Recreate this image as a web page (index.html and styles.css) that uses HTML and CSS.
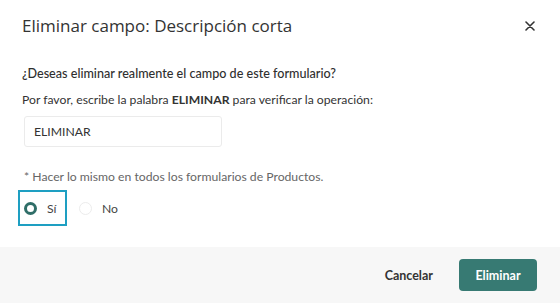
FILE: index.html
```html
<!DOCTYPE html>
<html lang="es">
<head>
<meta charset="utf-8">
<title>Eliminar campo</title>
<link rel="stylesheet" href="styles.css">
</head>
<body>
<div class="modal">
  <div class="modal-header">
    <h1 class="modal-title">Eliminar campo: Descripción corta</h1>
    <button class="close" aria-label="Cerrar">
      <svg width="10" height="10" viewBox="0 0 10 10"><path d="M1 1L9 9M9 1L1 9" stroke="#333" stroke-width="1.6" stroke-linecap="round"/></svg>
    </button>
  </div>
  <div class="modal-body">
    <p class="question">¿Deseas eliminar realmente el campo de este formulario?</p>
    <p class="hint">Por favor, escribe la palabra <strong>ELIMINAR</strong> para verificar la operación:</p>
    <input class="confirm-input" type="text" value="ELIMINAR">
    <p class="note">* Hacer lo mismo en todos los formularios de Productos.</p>
    <div class="radios">
      <label class="radio focused"><span class="dot checked"></span><span>Sí</span></label>
      <label class="radio"><span class="dot"></span><span>No</span></label>
    </div>
  </div>
  <div class="modal-footer">
    <button class="btn-link">Cancelar</button>
    <button class="btn-primary">Eliminar</button>
  </div>
</div>
</body>
</html>
```

FILE: styles.css
```css
* { box-sizing: border-box; }
html, body { margin: 0; padding: 0; background: #fff; }
body { font-family: "Lato", "Open Sans", sans-serif; color: #333; }

.modal {
  width: 560px;
  height: 303px;
  display: flex;
  flex-direction: column;
}

.modal-header {
  display: flex;
  justify-content: space-between;
  align-items: center;
  padding: 8px 24px 0 22px;
  height: 44px;
}
.modal-title {
  margin: 0;
  font-family: "Open Sans", "Noto Sans", sans-serif;
  font-size: 17px;
  font-weight: 400;
  color: #333;
  line-height: 24px;
}
.close {
  border: 0;
  background: none;
  padding: 0;
  width: 12px;
  height: 12px;
  display: flex;
  align-items: center;
  justify-content: center;
}

.modal-body {
  flex: 1;
  padding: 20px 22px 0 22px;
}
.question {
  margin: 0;
  font-size: 12.6px;
  font-weight: 500;
  line-height: 20px;
  color: #2f2f2f;
}
.hint {
  margin: 5.5px 0 0 0;
  font-size: 12.2px;
  line-height: 20px;
  color: #333;
}
.hint strong { font-weight: 700; }

.confirm-input {
  display: block;
  margin: 6.5px 0 0 2px;
  width: 198px;
  height: 31px;
  border: 1px solid #ebebeb;
  border-radius: 3px;
  padding: 0 9px;
  font-family: inherit;
  font-size: 12.2px;
  color: #333;
  outline: none;
}

.note {
  margin: 20px 0 0 2px;
  font-size: 12.2px;
  line-height: 20px;
  color: #666;
}

.radios {
  display: flex;
  align-items: center;
  margin: 3px 0 0 -4px;
}
.radio {
  display: flex;
  align-items: center;
  gap: 10px;
  height: 36px;
  font-size: 12.2px;
  color: #444;
  padding: 0 14px 0 4px;
  border: 2px solid transparent;
}
.radio.focused {
  border-color: #1e9fc2;
  width: 49px;
}
.dot {
  flex: 0 0 auto;
  width: 13px;
  height: 13px;
  border-radius: 50%;
  border: 1px solid #ececec;
  background: #fff;
}
.dot.checked {
  border: 3.5px solid #2f6e68;
}
.radio + .radio { padding-left: 10px; }

.modal-footer {
  height: 56px;
  background: #f7f7f7;
  display: flex;
  justify-content: flex-end;
  align-items: center;
  padding: 0 23px 0 0;
  gap: 26px;
}
.btn-link {
  border: 0;
  background: none;
  font-family: inherit;
  font-size: 12.5px;
  font-weight: 700;
  color: #333;
  padding: 0;
}
.btn-primary {
  border: 0;
  background: #377a73;
  color: #fff;
  font-family: inherit;
  font-size: 12.5px;
  font-weight: 700;
  width: 78px;
  height: 32px;
  border-radius: 4px;
}
```
